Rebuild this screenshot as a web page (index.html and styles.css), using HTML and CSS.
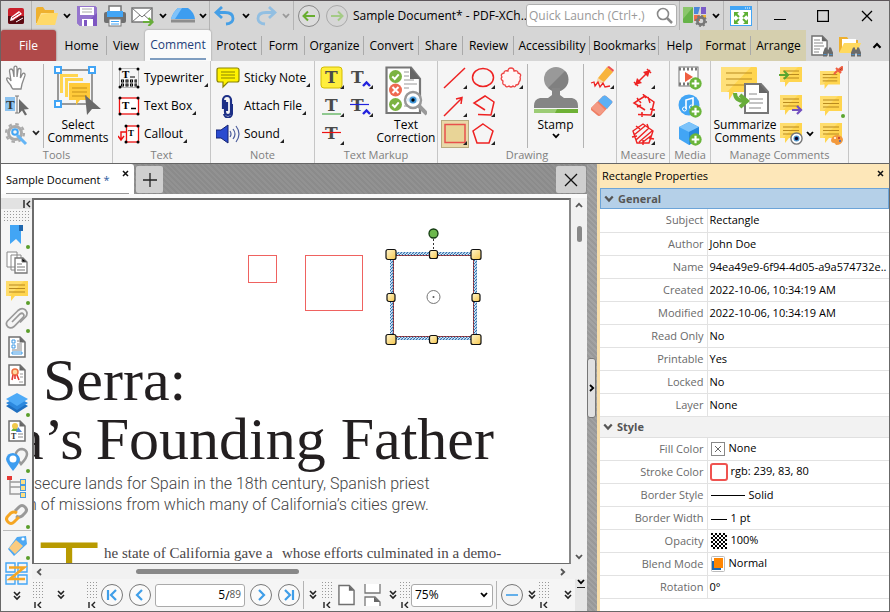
FILE: index.html
```html
<!DOCTYPE html>
<html lang="en">
<head>
<meta charset="utf-8">
<title>Sample Document* - PDF-XChange Editor</title>
<link rel="stylesheet" href="styles.css">
</head>
<body>
<svg class="sprite" width="0" height="0" aria-hidden="true">
  <defs>
    <linearGradient id="gold" x1="0" y1="0" x2="1" y2="1"><stop offset="0" stop-color="#fff6d0"/><stop offset="1" stop-color="#f6c74c"/></linearGradient>
    <pattern id="hatch" width="3" height="3" patternUnits="userSpaceOnUse"><rect width="3" height="3" fill="#d9ecfb"/><path d="M0 3L3 0" stroke="#2d6fae" stroke-width="1.2"/></pattern>
    <pattern id="dots" width="3" height="3" patternUnits="userSpaceOnUse"><rect width="1" height="1" fill="#999"/></pattern>
    <pattern id="check" width="4" height="4" patternUnits="userSpaceOnUse"><rect width="4" height="4" fill="#fff"/><path d="M0 0h2v2h-2zM2 2h2v2h-2z" fill="#000"/></pattern>
  </defs>
  <symbol id="chev" viewBox="0 0 8 6"><path d="M1 1l3 3.2L7 1" fill="none" stroke="currentColor" stroke-width="1.8"/></symbol>
  <symbol id="dchev" viewBox="0 0 8 10"><path d="M1 1l3 3 3-3M1 5l3 3 3-3" fill="none" stroke="#222" stroke-width="1.6"/></symbol>
  <symbol id="grip" viewBox="0 0 10 26"><rect width="10" height="17" fill="url(#dots)"/><path d="M2 20v6M8 20L5 23l3 3" fill="none" stroke="#222" stroke-width="1.4"/></symbol>
  <symbol id="bub" viewBox="0 0 24 22"><path d="M1 1h22v15H10l-4 5v-5H1z" fill="#ffd54f"/><path d="M1 1h18L4 16H1z" fill="#ffdd6c"/><path d="M4 5h16M4 8.500h16M4 12h16" stroke="#b98a1f" stroke-width="1.1"/></symbol>
  <symbol id="plus" viewBox="0 0 12 12"><circle cx="6" cy="6" r="5.700" fill="#6ab53a"/><path d="M6 2.500v7M2.500 6h7" stroke="#fff" stroke-width="2"/></symbol>
  <symbol id="doc" viewBox="0 0 18 22"><path d="M1 1h11l5 5v15H1z" fill="#fff" stroke="#707070" stroke-width="1.500"/><path d="M11.500 1v5.500H17z" fill="#666"/></symbol>
  <symbol id="bino" viewBox="0 0 12 11"><path d="M1 10V6l2-5h2v2h2V1h2l2 5v4H7V7H5v3z" fill="#6b6b6b"/><path d="M1.500 8h3M7.500 8h3" stroke="#4d8fc6" stroke-width="1"/></symbol>
  <symbol id="ok" viewBox="0 0 12 12"><circle cx="6" cy="6" r="6" fill="#7cb342"/><path d="M3 6l2.300 2.300L9 4" fill="none" stroke="#fff" stroke-width="1.800"/></symbol>
  <symbol id="eye" viewBox="0 0 14 14"><circle cx="7" cy="7" r="6" fill="#fff" stroke="#777" stroke-width="1.500"/><circle cx="7" cy="7" r="3.200" fill="#4b91c7"/><circle cx="7" cy="7" r="1.800" fill="#102"/></symbol>
</svg>

<div class="window">
  <header class="titlebar">
    <span class="cell w30"><svg width="18" height="18" viewBox="0 0 18 18"><rect x="1" y="1" width="16" height="16" rx="2" fill="#c9202b"/><path d="M1 9h16v6a2 2 0 0 1-2 2H3a2 2 0 0 1-2-2z" fill="#5a0a12"/><path d="M3 14l1-4 8-6 3 3-8 6z" fill="#fff"/><path d="M5 11l8-5M6.500 13l8-5" stroke="#c9202b"/><path d="M9 15l7-4" stroke="#fff"/></svg></span>
    <button class="cell w30 sep-left" aria-label="Open"><svg width="24" height="20" viewBox="0 0 24 20"><path d="M1 3q0-2 2-2h5l2 3h9v13H1z" fill="#eeb02f"/><path d="M6 7h17l-3 12H1z" fill="#ffe08a"/><path d="M1 19L6 9l8-2h9l-3 12z" fill="#ffd454" opacity=".6"/></svg></button>
    <button class="cell w12" aria-label="Open options"><svg width="8" height="6"><use href="#chev"/></svg></button>
    <button class="cell w28" aria-label="Save"><svg width="22" height="22" viewBox="0 0 22 22"><path d="M1 1h18l2 2v18H4l-3-3z" fill="#7e57c2"/><path d="M1 1h18l2 2v5L7 21H4l-3-3z" fill="#9575cd"/><rect x="4" y="2" width="14" height="8" fill="#fff"/><path d="M6 4h10M6 7h10" stroke="#aaa"/><rect x="6" y="14" width="11" height="7" fill="#fff"/><rect x="8" y="15" width="3" height="6" fill="#7e57c2"/></svg></button>
    <button class="cell w28" aria-label="Print"><svg width="22" height="22" viewBox="0 0 22 22"><path d="M5 1h12v7H5z" fill="#fff" stroke="#777" stroke-width="1.500"/><rect x="0" y="7" width="22" height="11" rx="2" fill="#707070"/><path d="M3 6h16v6H3z" fill="#42a5f5"/><rect x="5" y="14" width="12" height="7" fill="#fff" stroke="#777"/><path d="M7 16.500h8M7 19h8" stroke="#42a5f5"/></svg></button>
    <button class="cell w28" aria-label="Send by e-mail"><svg width="24" height="20" viewBox="0 0 24 20"><rect x="1" y="2" width="20" height="14" fill="#fff" stroke="#777" stroke-width="1.500"/><path d="M1 2l10 9L21 2M1 16l8-7M21 16l-8-7" fill="none" stroke="#777"/><path d="M12 16h9M17.500 12l4 4-4 4" fill="none" stroke="#68ad3a" stroke-width="2.200"/></svg></button>
    <button class="cell w12" aria-label="Send options"><svg width="8" height="6"><use href="#chev"/></svg></button>
    <button class="cell w28" aria-label="Scan"><svg width="26" height="18" viewBox="0 0 26 18"><path d="M8 1h10q6 4 7 11H1Q3 5 8 1z" fill="#3d9df0"/><path d="M8 1h4L5 12H1Q3 5 8 1z" fill="#7ec2fa"/><path d="M1 14h24" stroke="#8d8d8d" stroke-width="3"/></svg></button>
    <button class="cell w12" aria-label="Scan options"><svg width="8" height="6"><use href="#chev"/></svg></button>
    <button class="cell w30 sep-left" aria-label="Undo"><svg width="22" height="20" viewBox="0 0 22 20"><path d="M8 1L2 6.500 8 12M2 6.500h9q8 0 8 6 0 5-7 5.500" fill="none" stroke="#459fe6" stroke-width="2.800"/></svg></button>
    <button class="cell w14" aria-label="Undo list"><svg width="8" height="6"><use href="#chev"/></svg></button>
    <button class="cell w26" aria-label="Redo"><svg width="22" height="20" viewBox="0 0 22 20"><path d="M14 1l6 5.500-6 5.500M20 6.500h-9q-8 0-8 6 0 5 7 5.500" fill="none" stroke="#92bfe2" stroke-width="2.800"/></svg></button>
    <button class="cell w14 faded" aria-label="Redo list"><svg width="8" height="6"><use href="#chev"/></svg></button>
    <button class="cell w30 sep-left" aria-label="Back"><svg width="24" height="24" viewBox="0 0 24 24"><circle cx="12" cy="12" r="10.500" fill="#dcdcdc" stroke="#888"/><path d="M18 12H7M11 7.500L6.500 12l4.500 4.500" fill="none" stroke="#68ad2f" stroke-width="2"/></svg></button>
    <button class="cell w28" aria-label="Forward"><svg width="24" height="24" viewBox="0 0 24 24"><circle cx="12" cy="12" r="10.500" fill="none" stroke="#aaa"/><path d="M6 12h11M13 7.500l4.500 4.500-4.500 4.500" fill="none" stroke="#a4cb86" stroke-width="2"/></svg></button>
    <h1 class="title">Sample Document* - PDF-XCh..</h1>
    <label class="launch"><input type="text" placeholder="Quick Launch (Ctrl+.)" aria-label="Quick Launch"><svg width="18" height="18" viewBox="0 0 18 18"><circle cx="7" cy="7" r="5.500" fill="none" stroke="#888" stroke-width="1.600"/><path d="M11 11l5 5" stroke="#888" stroke-width="2.500"/></svg></label>
    <button class="cell w30 sep-left" aria-label="UI options"><svg width="24" height="22" viewBox="0 0 24 22"><rect x="0" y="2" width="10" height="16" rx="1" fill="#66b348"/><path d="M0 2h10L0 14z" fill="#8bc66b"/><path d="M11 2h6l-2 7h-4z" fill="#4a86d8"/><rect x="18" y="2" width="5" height="7" fill="#7b5cc9"/><rect x="11" y="10" width="6" height="6" fill="#ef7048"/><rect x="19" y="10" width="4" height="4" fill="#f2b632"/><circle cx="18" cy="16" r="3.600" fill="none" stroke="#777" stroke-width="2.600"/><circle cx="18" cy="16" r="5.200" fill="none" stroke="#777" stroke-width="1.600" stroke-dasharray="2 2"/></svg></button>
    <button class="cell w14" aria-label="UI list"><svg width="8" height="6"><use href="#chev"/></svg></button>
    <button class="cell w34 sep-left" aria-label="Full screen"><svg width="22" height="20" viewBox="0 0 22 20"><rect x=".5" y=".5" width="21" height="19" fill="#fff" stroke="#42a5f5"/><path d="M0 0h22v4H0z" fill="#42a5f5"/><path d="M15 2h1M17 2h1M19 2h1" stroke="#fff"/><path d="M4 6h5L4 11zM18 6h-5l5 5zM4 18h5l-5-5zM18 18h-5l5-5z" fill="#5eb033"/><path d="M5 7l4 4M17 7l-4 4M5 17l4-4M17 17l-4-4" stroke="#5eb033" stroke-width="2"/></svg></button>
    <button class="cell w44 sep-left" aria-label="Minimize"><svg width="12" height="12"><path d="M0 9.500h12" stroke="#000"/></svg></button>
    <button class="cell w44" aria-label="Maximize"><svg width="12" height="12"><rect x=".5" y=".5" width="11" height="11" fill="none" stroke="#000" stroke-width="1.400"/></svg></button>
    <button class="cell w44" aria-label="Close"><svg width="12" height="12"><path d="M1 1l10 10M11 1L1 11" stroke="#000" stroke-width="1.300"/></svg></button>
  </header>

  <nav class="tabs">
    <a class="file" href="#">File</a>
    <a class="bar" href="#">Home</a>
    <a href="#">View</a>
    <a class="active" href="#"><span>Comment</span></a>
    <a class="bar" href="#">Protect</a>
    <a class="bar" href="#">Form</a>
    <a class="bar" href="#">Organize</a>
    <a class="bar" href="#">Convert</a>
    <a class="bar" href="#">Share</a>
    <a class="bar" href="#">Review</a>
    <a class="bar" href="#">Accessibility</a>
    <a class="bar" href="#">Bookmarks</a>
    <a href="#">Help</a>
    <a class="ctx bar" href="#">Format</a>
    <a class="ctx" href="#">Arrange</a>
    <div class="tab-tools">
      <button class="cell w28" aria-label="Find"><svg width="24" height="24" viewBox="0 0 24 24"><use href="#doc" x="1" y="1" width="17" height="21"/><path d="M4 6h6M4 9h9M4 12h10M4 15h6M4 18h5" stroke="#888"/><use href="#bino" x="12" y="12" width="12" height="12"/></svg></button>
      <button class="cell w28" aria-label="Search"><svg width="24" height="24" viewBox="0 0 24 24"><path d="M1 3h8l2 3h9v12H1z" fill="#eeb02f"/><path d="M4 5h14v8H4z" fill="#fff"/><path d="M6 9h17l-4 10H1z" fill="#ffd95e"/><use href="#bino" x="12" y="12" width="12" height="12"/></svg></button>
      <button class="cell grow" aria-label="Collapse ribbon"><svg class="flip" width="10" height="7"><use href="#chev"/></svg></button>
    </div>
  </nav>

  <section class="ribbon">
    <div class="group g-tools">
      <div class="body">
        <div class="col w42">
          <button class="tool" aria-label="Hand"><svg width="22" height="26" viewBox="0 0 22 26"><path d="M7 23q-1-3-4-6-2-3-1-4 2-1 4 3L4.500 6q0-2 1.500-2T8 6l1 6V3q0-1.800 1.500-1.800T12 3v9l1-7q.3-1.700 1.700-1.500T16 5.500l-.6 7.500 2-4q1-1.300 2-.6t.6 2L17 19l-1 5H8z" fill="#fff" stroke="#888" stroke-width="1.300"/></svg></button>
          <button class="tool" aria-label="Select text"><svg width="24" height="22" viewBox="0 0 24 22"><rect x="0" y="2" width="10" height="14" fill="#8cc3f0"/><text x="1" y="14" class="t-ser" font-size="13">T</text><path d="M10 1h4M12 1v17M10 18h4" stroke="#777"/><path d="M14 4l10 10-5 .5 3 5-2 1-3-5-3 3z" fill="#6a6a6a"/></svg></button>
          <button class="tool" aria-label="Settings"><svg width="36" height="24" viewBox="0 0 36 24"><circle cx="10" cy="11" r="6.500" fill="none" stroke="#aaa" stroke-width="3"/><circle cx="10" cy="11" r="9" fill="none" stroke="#aaa" stroke-width="2.200" stroke-dasharray="3.500 3.570"/><circle cx="10" cy="10" r="2.800" fill="none" stroke="#42a5f5" stroke-width="2"/><path d="M12 13l9 9" stroke="#64b5f6" stroke-width="3"/><path d="M28 9l3 3.200 3-3.200" fill="none" stroke="#222" stroke-width="1.800"/></svg></button>
        </div>
        <button class="big sep-left grow"><svg width="48" height="50" viewBox="0 0 48 50"><rect x="4" y="4" width="34" height="34" fill="none" stroke="#999" stroke-width="2"/><path d="M6 8h18v3H9v16H6zM11 12h18v3H14v16h-3z" fill="#ffd54f"/><path d="M15 17h21v17H26l-4 5v-5h-7z" fill="#ffca3a"/><path d="M18 22h15M18 26h15M18 30h15" stroke="#c79118"/><g fill="#fff" stroke="#42a5f5" stroke-width="2"><rect x="1" y="1" width="6" height="6"/><rect x="35" y="1" width="6" height="6"/><rect x="1" y="35" width="6" height="6"/></g><path d="M31 29l16 14h-9l-5 6z" fill="#6a6a6a"/></svg><span>Select<br>Comments</span></button>
      </div>
      <h2>Tools</h2>
    </div>
    <div class="group g-text">
      <div class="body"><div class="col grow">
        <button class="row"><svg width="22" height="22" viewBox="0 0 22 22"><rect x="1.500" y="1.500" width="19" height="19" fill="none" stroke="#777" stroke-dasharray="1 1"/><text x="4" y="11" class="t-blk" font-size="11">T</text><path d="M12 10h5" stroke="#000"/><path d="M3 14h16M3 18h16" stroke="#000" stroke-width="3" stroke-dasharray="3 1.500"/><path d="M4 14h15M4 18h15" stroke="#fff" stroke-dasharray="1 3.500"/><g><circle cx="2" cy="2" r="1.500"/><circle cx="20" cy="2" r="1.500"/><circle cx="2" cy="20" r="1.500"/><circle cx="20" cy="20" r="1.500"/></g></svg><span>Typewriter</span></button>
        <button class="row"><svg width="22" height="20" viewBox="0 0 22 20"><rect x="1.500" y="2" width="19" height="16" fill="#fff" stroke="#e11" stroke-width="1.300"/><text x="4" y="13" class="t-blk" font-size="11">T</text><path d="M13 12.500h5" stroke="#000" stroke-width="1.500"/><circle cx="2" cy="2" r="1.500"/><circle cx="20" cy="2" r="1.500"/><circle cx="2" cy="18" r="1.500"/><circle cx="20" cy="18" r="1.500"/></svg><span>Text Box</span></button>
        <button class="row"><svg width="22" height="20" viewBox="0 0 22 20"><rect x="8.500" y="2" width="12" height="16" fill="#fff" stroke="#e11" stroke-width="1.300"/><text x="10" y="12" class="t-blk" font-size="9">T</text><path d="M8 8H3v8M0 12l3 4 3-4" fill="none" stroke="#e11" stroke-width="1.400"/><circle cx="8" cy="2" r="1.500"/><circle cx="20" cy="2" r="1.500"/><circle cx="8" cy="18" r="1.500"/><circle cx="20" cy="18" r="1.500"/></svg><span>Callout</span></button>
      </div></div>
      <h2>Text</h2>
    </div>
    <div class="group g-note">
      <div class="body"><div class="col grow">
        <button class="row"><svg width="24" height="22" viewBox="0 0 24 22"><path d="M3 1h18q2 0 2 2v10q0 2-2 2H12l-5 5v-5H3q-2 0-2-2V3q0-2 2-2z" fill="#fff200" stroke="#8a8300" stroke-width="1.200"/><path d="M5 5h14M5 8h14M5 11h14" stroke="#8a8300"/></svg><span>Sticky Note</span></button>
        <button class="row"><svg width="24" height="24" viewBox="0 0 24 24"><path d="M9 6v12a3 3 0 0 0 6 0V6a4 4 0 0 0-8 0v9M11 8v9" fill="none" stroke="#1c2f86" stroke-width="2.200"/><path d="M16 10v9a4 4 0 0 1-8 1" fill="none" stroke="#1c2f86" stroke-width="2"/></svg><span>Attach File</span></button>
        <button class="row"><svg width="24" height="20" viewBox="0 0 24 20"><path d="M0 6h5l7-5v18l-7-5H0z" fill="#2a4bd0" stroke="#15236e"/><path d="M14 7q2 3 0 6M17 5q4 5 0 10M20 2q6 8 0 16" fill="none" stroke="#4a5c9c" stroke-width="1.200"/></svg><span>Sound</span></button>
      </div></div>
      <h2>Note</h2>
    </div>
    <div class="group g-markup">
      <div class="body">
        <div class="tiles two">
          <button class="tile more" aria-label="Highlight"><svg width="24" height="24" viewBox="0 0 24 24"><rect x="1" y="1" width="21" height="21" rx="3" fill="#ffee3d" stroke="#d4bd00"/><text x="5" y="17" class="t-mk">T</text></svg></button>
          <button class="tile more" aria-label="Insert text"><svg width="24" height="24" viewBox="0 0 24 24"><text x="2" y="17" class="t-mk">T</text><path d="M14 20l3.500-3.500L21 20" fill="none" stroke="#22d" stroke-width="2.400"/></svg></button>
          <button class="tile more" aria-label="Underline"><svg width="24" height="24" viewBox="0 0 24 24"><text x="5" y="17" class="t-mk">T</text><path d="M2 20h19" stroke="#58b158" stroke-width="1.300"/></svg></button>
          <button class="tile more" aria-label="Replace text"><svg width="24" height="24" viewBox="0 0 24 24"><text x="2" y="17" class="t-mk">T</text><path d="M1 10.500h19" stroke="#22d" stroke-width="1.200"/><path d="M14 20l3.500-3.500L21 20" fill="none" stroke="#22d" stroke-width="2.400"/></svg></button>
          <button class="tile more" aria-label="Strikeout"><svg width="24" height="24" viewBox="0 0 24 24"><text x="5" y="17" class="t-mk">T</text><path d="M2 10.500h19" stroke="#e11" stroke-width="1.200"/></svg></button>
        </div>
        <button class="big grow"><svg width="42" height="50" viewBox="0 0 42 50"><path d="M1.500 1.500H26L35 13v34H1.500z" fill="#fff" stroke="#777" stroke-width="2.200"/><path d="M25 1v12h10z" fill="#666"/><use href="#ok" x="4" y="4" width="13" height="13"/><circle cx="10.500" cy="24" r="6.500" fill="#ef6950"/><path d="M7.500 21l6 6M13.500 21l-6 6" stroke="#fff" stroke-width="2"/><use href="#ok" x="4" y="32" width="13" height="13"/><path d="M19 6h5M19 10h5M19 14h10M19 18h13M19 22h5M19 40h8" stroke="#999"/><path d="M33 39l9 9" stroke="#999" stroke-width="4"/><circle cx="28" cy="34" r="8" fill="#fff" stroke="#999" stroke-width="2.500"/><path d="M21 34q7-8 14 0-7 7-14 0" fill="#dcecf8"/><circle cx="28" cy="34" r="3.500" fill="#3f96d8"/><circle cx="28" cy="34" r="1.700"/></svg><span>Text<br>Correction</span></button>
      </div>
      <h2>Text Markup</h2>
    </div>
    <div class="group g-draw">
      <div class="body">
        <div class="tiles three">
          <button class="tile more" aria-label="Line"><svg width="24" height="24"><path d="M1 22L22 2" stroke="#e22" stroke-width="1.500"/></svg></button>
          <button class="tile more" aria-label="Oval"><svg width="24" height="24"><ellipse cx="12" cy="11.500" rx="10.500" ry="9" fill="none" stroke="#e22" stroke-width="1.500"/></svg></button>
          <button class="tile more" aria-label="Cloud"><svg width="24" height="24"><path d="M12 2q3 0 3 3 4-1 4 2 4 1 2 4 1 3-1 5 0 3-3 3-1 3-3 1-2 2-4 0-3 2-4-1-3 0-2-4-3-2-1-4-2-3 2-4 0-3 4-2 0-3 3-3z" fill="#fff6f6" stroke="#e44" stroke-width="1.300"/></svg></button>
          <button class="tile more" aria-label="Arrow"><svg width="24" height="24"><path d="M1 22L19 4M13 5l6-1.500L18 10" fill="none" stroke="#e22" stroke-width="1.500"/></svg></button>
          <button class="tile more" aria-label="Polyline"><svg width="24" height="24"><path d="M14 16L3 9l11-7 9 6-3 13-13-.5" fill="none" stroke="#e22" stroke-width="1.500"/></svg></button>
          <span class="tile"></span>
          <button class="tile more chosen" aria-label="Rectangle"><svg width="24" height="22"><rect x="2" y="1.500" width="20" height="18" fill="#e8d497" stroke="#e8504c" stroke-width="1.500"/></svg></button>
          <button class="tile more" aria-label="Polygon"><svg width="24" height="24"><path d="M12 2L22 9 18 21H6L2 9z" fill="none" stroke="#e22" stroke-width="1.500"/></svg></button>
        </div>
        <button class="big stamp sep-left"><svg width="46" height="50" viewBox="0 0 46 50"><circle cx="23" cy="13" r="12" fill="#999"/><path d="M32 5a12 12 0 0 1-17 17z" fill="#808080"/><path d="M19 22h8v7l4 3h8q6 1 6 8v2H1v-2q0-7 6-8h8l4-3z" fill="#858585"/><path d="M1 43h44v4H1z" fill="#9ccc75"/><path d="M24 43h21v4H22z" fill="#6eb135"/></svg><span>Stamp</span><svg width="8" height="6"><use href="#chev"/></svg></button>
        <div class="tiles one sep-left">
          <button class="tile more" aria-label="Pencil"><svg width="24" height="24"><path d="M8 12l9-11 6 5-9 10-7 2z" fill="#f8b43c"/><path d="M17 1l6 5 1-2-5-4z" fill="#ef5350"/><path d="M8 12l6 4-8 2z" fill="#f6d9ae"/><path d="M1 17l3-1 1 4 3-4 2 5 3-4 2 4 5-1" fill="none" stroke="#e22" stroke-width="1.300"/></svg></button>
          <button class="tile" aria-label="Eraser"><svg width="24" height="24"><path d="M1 14L13 2q2-1 3 0l6 5q1 1 0 2L11 21q-2 2-4 0l-6-5z" fill="#ef7e63"/><path d="M8 7l5-5q2-1 3 0l6 5q1 1 0 2l-5 6z" fill="#5cb0f5"/><path d="M1 14l6-6 8 8-5 5z" fill="#f39a84"/></svg></button>
        </div>
      </div>
      <h2>Drawing</h2>
    </div>
    <div class="group g-measure">
      <div class="body mid"><div class="tiles one">
        <button class="tile more" aria-label="Distance"><svg width="24" height="24"><path d="M4 19L19 4M3 16l4 4M16 3l4 4" fill="none" stroke="#e22" stroke-width="1.500"/><path d="M4 19l2-7 5 5zM19 4l-7 2 5 5z" fill="#e22"/></svg></button>
        <button class="tile more" aria-label="Perimeter"><svg width="24" height="24"><path d="M14 16L3 9l11-7 9 6-3 13-13-.5M6 4l4 5M17 3l2 6M19 15l5 1M11 18v5M6 13l4-2M12 0l3 4" fill="none" stroke="#e22" stroke-width="1.500"/></svg></button>
        <button class="tile more" aria-label="Area"><svg width="24" height="24"><path d="M12 2L22 9 18 21H6L2 9zM3 13L14 4M5 18L18 6M8 20L21 9M12 20l9-7M5 4l4 3M16 2l2 5M1 15l5-1M18 16l5 1M12 18v5" fill="none" stroke="#e22" stroke-width="1.400"/></svg></button>
      </div></div>
      <h2>Measure</h2>
    </div>
    <div class="group g-media">
      <div class="body mid"><div class="tiles one">
        <button class="tile" aria-label="Video"><svg width="24" height="24"><rect x="1" y="1" width="19" height="19" fill="#fff" stroke="#777"/><path d="M1 3h20M1 18h20" stroke="#777" stroke-width="3" stroke-dasharray="2 2"/><path d="M7 6l8 5-8 5z" fill="#ef5f42"/><use href="#plus" x="11" y="11" width="13" height="13"/></svg></button>
        <button class="tile" aria-label="Audio"><svg width="24" height="24"><circle cx="11" cy="11" r="10.500" fill="#42a5f5"/><path d="M8 15V6l7-2v9" fill="none" stroke="#fff" stroke-width="1.600"/><circle cx="6.500" cy="15" r="2" fill="none" stroke="#fff"/><circle cx="13.500" cy="13" r="2" fill="none" stroke="#fff"/><use href="#plus" x="11" y="11" width="13" height="13"/></svg></button>
        <button class="tile" aria-label="3D"><svg width="24" height="24"><path d="M11 0l10 5v12l-10 6L1 17V5z" fill="#42a5f5"/><path d="M11 0l10 5-10 5L1 5z" fill="#7cc3fa"/><path d="M11 10l10-5v12l-10 6z" fill="#2688dd"/><use href="#plus" x="11" y="11" width="13" height="13"/></svg></button>
      </div></div>
      <h2>Media</h2>
    </div>
    <div class="group g-manage">
      <div class="body">
        <button class="big sum"><svg width="48" height="50" viewBox="0 0 48 50"><path d="M0 2q0-1 1-1h34q1 0 1 1v24H13l-5 8v-8H0z" fill="#ffd54f"/><path d="M0 1h30L6 26H0z" fill="#ffe079"/><path d="M5 7h26M5 13h26M5 19h18" stroke="#b98a1f"/><path d="M24 18h16l7 8v21H24z" fill="#fff" stroke="#777" stroke-width="2"/><path d="M38 17v10h9z" fill="#666"/><path d="M28 28h8M28 33h14M28 37h14M28 42h12" stroke="#888"/><path d="M14 27q0 8 10 8M19 29l7 6-7 6" fill="none" stroke="#68ad3a" stroke-width="4"/></svg><span>Summarize<br>Comments</span></button>
        <div class="tiles manage">
          <button class="tile" aria-label="Import comments"><svg width="24" height="24"><use href="#bub" width="24" height="22"/><path d="M0 9h8M5 5l4 4-4 4" fill="none" stroke="#5ba52f" stroke-width="2"/></svg></button>
          <button class="tile" aria-label="Pin comments"><svg width="24" height="24"><use href="#bub" y="4" width="22" height="20"/><path d="M15 8l4-4M17 2l5 5M19 4l4-3 1 2-4 3" stroke="#ef5f42" stroke-width="2"/></svg></button>
          <button class="tile" aria-label="Export comments"><svg width="24" height="24"><use href="#bub" width="24" height="22"/><path d="M13 16h9M18 12l4 4-4 4" fill="none" stroke="#7350c0" stroke-width="2.200"/></svg></button>
          <button class="tile" aria-label="Comment list"><svg width="28" height="24"><use href="#bub" y="1" width="24" height="22"/><circle cx="24" cy="22" r="2" fill="#5ba52f"/></svg></button>
          <button class="tile" aria-label="Show comments"><svg width="36" height="24"><use href="#bub" width="24" height="22"/><use href="#eye" x="11" y="10" width="13" height="13"/><use href="#chev" x="27" y="9" width="8" height="6"/></svg></button>
          <button class="tile" aria-label="Comment styles"><svg width="24" height="24"><use href="#bub" width="24" height="22"/><path d="M12 18q1-5 7-5 5 1 5 5-1 5-7 5-1-2-2-2-3 0-3-3z" fill="#f39a3d"/><circle cx="16" cy="16" r="1" fill="#fff"/><circle cx="20" cy="16" r="1" fill="#b33"/><circle cx="21" cy="19" r="1" fill="#36c"/></svg></button>
        </div>
      </div>
      <h2>Manage Comments</h2>
    </div>
  </section>

  <main class="work">
    <section class="docarea">
      <div class="doctabs">
        <a class="doctab" href="#"><span>Sample Document <b>*</b></span><svg width="7" height="7"><path d="M1 1l5 5M6 1L1 6" stroke="#111" stroke-width="1.500"/></svg></a>
        <button class="newtab" aria-label="New tab"><svg width="16" height="16"><path d="M8 1v14M1 8h14" stroke="#222" stroke-width="1.300"/></svg></button>
        <button class="closetab" aria-label="Close document"><svg width="14" height="14"><path d="M1 1l12 12M13 1L1 13" stroke="#111" stroke-width="1.300"/></svg></button>
      </div>
      <div class="docbody">
        <aside class="side">
          <div class="pin"><svg width="8" height="8"><path d="M1 0v8M7 1L4 4l3 3" fill="none" stroke="#222" stroke-width="1.400"/></svg></div>
          <svg class="sgrip" width="26" height="10"><rect width="26" height="10" fill="url(#dots)"/></svg>
          <button class="panel dot" aria-label="Bookmarks"><svg width="16" height="22"><path d="M1 1h11v19l-5-5-6 5z" fill="#42a5f5"/><path d="M10 1h4v6h-4z" fill="#2067ae"/></svg></button>
          <button class="panel" aria-label="Thumbnails"><svg width="22" height="24"><path d="M1 1h10v15H1zM5 4h10v15H5z" fill="#fff" stroke="#888"/><path d="M9 7h8l4 4v11H9z" fill="#fff" stroke="#777" stroke-width="1.300"/><path d="M16 7v4h5zM11 13h5M11 16h8M11 19h8" stroke="#777"/></svg></button>
          <button class="panel dot" aria-label="Comments"><svg width="24" height="22"><use href="#bub" width="24" height="22"/></svg></button>
          <button class="panel dot" aria-label="Attachments"><svg width="24" height="24"><path d="M7 15L15 7q2-1.500 3.300 0t0 3.200L9 19.500q-3 2.500-6 .5-3-3-.5-6L13 3.500q4-3.500 7.500-.5 3 3.500 0 7L15 15.500" fill="none" stroke="#999" stroke-width="1.700"/></svg></button>
          <button class="panel" aria-label="Fields"><svg width="18" height="22"><use href="#doc" width="18" height="22"/><path d="M4 4h3v3H4zM4 9h3v3H4zM4 16h10v2H4z" fill="none" stroke="#3f9ae5"/><path d="M9 5h2M9 8h5M9 10h5M9 12h5M4 14h10" stroke="#888"/></svg></button>
          <button class="panel" aria-label="Signatures"><svg width="18" height="22"><use href="#doc" width="18" height="22"/><circle cx="7" cy="8" r="3" fill="#ffd9a0" stroke="#ef6f42" stroke-width="1.500"/><path d="M5 11l-1 5M9 11l2 5M7 11v4" stroke="#e53935" stroke-width="1.600"/><path d="M12 10h3M12 13h3M11 18h4" stroke="#999"/></svg></button>
          <button class="panel dot" aria-label="Layers"><svg width="24" height="22"><path d="M12 8l11 6-11 7L1 14z" fill="#1f6fc0"/><path d="M12 5l11 6-11 7L1 11z" fill="#2c88de"/><path d="M12 1l11 6-11 7L1 7z" fill="#4daaf7"/></svg></button>
          <button class="panel" aria-label="Content"><svg width="18" height="22"><use href="#doc" width="18" height="22"/><path d="M3 11l4-5 4 5z" fill="#68ad3a"/><circle cx="7" cy="6" r="3" fill="#f2c94c"/><path d="M10 7l4 5H8z" fill="#4a86d8"/><text x="3" y="19" class="t-ser" font-size="8">T</text><path d="M10 14h5M10 17h5" stroke="#888"/></svg></button>
          <button class="panel dot" aria-label="Destinations"><svg width="24" height="24"><path d="M16 17q-6-8-5-11 2-4 6-4 5 1 5 5 0 4-6 10z" fill="none" stroke="#999" stroke-width="2.500"/><path d="M8 24Q1 15 1 12q1-6 7-6 6 1 7 6 0 4-7 12z" fill="#3d9df0"/><circle cx="8" cy="12" r="3.500" fill="#fff"/></svg></button>
          <button class="panel" aria-label="Structure"><svg width="22" height="24"><path d="M4 4v15h10M4 12h10M4 7h10" fill="none" stroke="#999" stroke-width="1.400"/><rect x="1" y="1" width="5" height="4" fill="#e53935"/><g fill="#ffe082" stroke="#4a9be0"><rect x="14.500" y="4.500" width="5" height="5"/><rect x="14.500" y="10.500" width="5" height="5"/><rect x="14.500" y="17.500" width="5" height="5"/></g></svg></button>
          <button class="panel dot" aria-label="Links"><svg width="24" height="24"><path d="M10 8l4-4q3-3 6 0t0 6l-3 3q-3 2-6 0" fill="none" stroke="#999" stroke-width="3"/><path d="M14 14l-5 5q-3 3-6 0t0-6l3-3q3-2 6 0" fill="none" stroke="#f5a623" stroke-width="3"/></svg></button>
          <hr>
          <button class="panel dot" aria-label="Tags"><svg width="22" height="24"><path d="M11 3l9-1 1 8L8 22l-6-7z" fill="#4da8f3"/><path d="M10 6l7 6-8 8-6-6z" fill="#fbcb7f"/><circle cx="17" cy="5" r="1.600" fill="#fff"/></svg></button>
          <button class="panel" aria-label="Article threads"><svg width="24" height="24"><path d="M1 1h9v9H1zM13 1h9v9h-9zM1 13h9v9H1zM13 13h9v9h-9z" fill="none" stroke="#42a5f5" stroke-width="1.400"/><path d="M4 5.500h15L5 17h15" fill="none" stroke="#f5a623" stroke-width="2.600"/></svg></button>
          <button class="sidemore" aria-label="More panels"><svg width="8" height="10"><use href="#dchev"/></svg></button>
        </aside>
        <div class="view">
          <div class="canvas">
            <article class="page">
              <h3>Serra:</h3>
              <h3 class="second"><span>a’s</span><span>Founding Father</span></h3>
              <p class="lead">secure lands for Spain in the 18th century, Spanish priest</p>
              <p class="lead cut">n of missions from which many of California’s cities grew.</p>
              <div class="columns">
                <span class="drop">T</span>
                <p class="c1">he state of California gave a</p>
                <p class="c2">whose efforts culminated in a demo-</p>
              </div>
            </article>
            <div class="sq small"></div>
            <div class="sq large"></div>
            <svg class="selection" width="98" height="120" viewBox="0 0 98 120">
              <path d="M48.500 12v12" stroke="#333" stroke-dasharray="2 2"/>
              <path d="M5 25h87v88H5zM9 29v80h79V29z" fill="url(#hatch)" fill-rule="evenodd"/>
              <rect x="8.500" y="28.500" width="80" height="81" fill="none" stroke="#b8434a"/>
              <rect x="8.500" y="28.500" width="80" height="81" fill="none" stroke="#234" stroke-dasharray="1 2"/>
              <circle cx="48.500" cy="6.500" r="4.500" fill="#6cb84c" stroke="#123a10" stroke-width="1.300"/>
              <circle cx="48.500" cy="70" r="6.500" fill="none" stroke="#777"/><circle cx="48.500" cy="70" r="1" fill="#555"/>
              <g fill="url(#gold)" stroke="#111" stroke-width="1.200"><rect x="1" y="22.500" width="10" height="10" rx="2"/><rect x="86" y="22.500" width="10" height="10" rx="2"/><rect x="1" y="107.500" width="10" height="10" rx="2"/><rect x="86" y="107.500" width="10" height="10" rx="2"/><rect x="44.500" y="23.500" width="8" height="8" rx="2"/><rect x="44.500" y="108.500" width="8" height="8" rx="2"/><rect x="2" y="66.500" width="8" height="8" rx="2"/><rect x="87" y="66.500" width="8" height="8" rx="2"/></g>
            </svg>
          </div>
          <div class="vscroll"><svg class="flip" width="8" height="6"><use href="#chev"/></svg><i></i><svg width="8" height="6"><use href="#chev"/></svg></div>
          <div class="hscroll"><svg class="left" width="8" height="6"><use href="#chev"/></svg><i></i><svg class="right" width="8" height="6"><use href="#chev"/></svg></div>
          <footer class="status">
            <svg class="g" width="10" height="26"><use href="#grip"/></svg>
            <button class="cell w34" aria-label="Toolbar options"><svg width="8" height="10"><use href="#dchev"/></svg></button>
            <svg class="g gap" width="10" height="26"><use href="#grip"/></svg>
            <button class="cell w28" aria-label="First page"><svg width="24" height="24"><circle cx="12" cy="12" r="10.500" fill="#fafafa" stroke="#777"/><path d="M8 7v10M16 7l-5 5 5 5" fill="none" stroke="#3f9ee8" stroke-width="2.200"/></svg></button>
            <button class="cell w28" aria-label="Previous page"><svg width="24" height="24"><circle cx="12" cy="12" r="10.500" fill="#fafafa" stroke="#777"/><path d="M14 7l-5 5 5 5" fill="none" stroke="#3f9ee8" stroke-width="2.200"/></svg></button>
            <label class="pageno"><input type="text" value="5" aria-label="Page"><span>/<small>89</small></span></label>
            <button class="cell w28" aria-label="Next page"><svg width="24" height="24"><circle cx="12" cy="12" r="10.500" fill="#fafafa" stroke="#777"/><path d="M10 7l5 5-5 5" fill="none" stroke="#3f9ee8" stroke-width="2.200"/></svg></button>
            <button class="cell w28" aria-label="Last page"><svg width="24" height="24"><circle cx="12" cy="12" r="10.500" fill="#fafafa" stroke="#777"/><path d="M8 7l5 5-5 5M16 7v10" fill="none" stroke="#3f9ee8" stroke-width="2.200"/></svg></button>
            <button class="cell w18 sep-left" aria-label="Navigation options"><svg width="8" height="10"><use href="#dchev"/></svg></button>
            <svg class="g" width="10" height="26"><use href="#grip"/></svg>
            <button class="cell w26" aria-label="Single page"><svg width="17" height="22"><use href="#doc" width="17" height="22"/></svg></button>
            <button class="cell w28" aria-label="Continuous"><svg width="18" height="22"><path d="M1 0v9h15V0M1 22v-9h10l5 5v4" fill="#fff" stroke="#777" stroke-width="1.300"/><path d="M10 13v5h6z" fill="#666"/></svg></button>
            <button class="cell w12" aria-label="Layout options"><svg width="8" height="10"><use href="#dchev"/></svg></button>
            <svg class="g" width="10" height="26"><use href="#grip"/></svg>
            <div class="zoom"><select aria-label="Zoom"><option>75%</option></select><svg width="8" height="6"><use href="#chev"/></svg></div>
            <button class="cell w30 sep-left" aria-label="Zoom out"><svg width="24" height="24"><circle cx="12" cy="12" r="10.500" fill="#f3f3f3" stroke="#777"/><path d="M6 12h12" stroke="#3f9ee8" stroke-width="1.600"/></svg></button>
            <button class="cell w12" aria-label="Zoom options"><svg width="8" height="10"><use href="#dchev"/></svg></button>
            <svg class="g" width="10" height="26"><use href="#grip"/></svg>
            <button class="cell w12 push" aria-label="More"><svg width="8" height="10"><use href="#dchev"/></svg></button>
            <button class="corner" aria-label="Customize"><svg width="8" height="10"><use href="#chev" width="8" height="6"/><path d="M0 8.500h8" stroke="#222"/></svg></button>
          </footer>
        </div>
      </div>
    </section>
    <div class="splitter"><button aria-label="Collapse pane"><svg class="right" width="8" height="6"><use href="#chev"/></svg></button></div>
    <aside class="props">
      <header><h2>Rectangle Properties</h2><button aria-label="Close pane"><svg width="7" height="7"><path d="M1 1l5 5M6 1L1 6" stroke="#111" stroke-width="1.500"/></svg></button></header>
      <h3 class="sel"><svg width="10" height="8"><use href="#chev"/></svg>General</h3>
      <table>
        <tr><th>Subject</th><td>Rectangle</td></tr>
        <tr><th>Author</th><td>John Doe</td></tr>
        <tr><th>Name</th><td>94ea49e9-6f94-4d05-a9a574732e..</td></tr>
        <tr><th>Created</th><td>2022-10-06, 10:34:19 AM</td></tr>
        <tr><th>Modified</th><td>2022-10-06, 10:34:19 AM</td></tr>
        <tr><th>Read Only</th><td>No</td></tr>
        <tr><th>Printable</th><td>Yes</td></tr>
        <tr><th>Locked</th><td>No</td></tr>
        <tr><th>Layer</th><td>None</td></tr>
      </table>
      <h3><svg width="10" height="8"><use href="#chev"/></svg>Style</h3>
      <table>
        <tr><th>Fill Color</th><td><svg width="14" height="14"><rect x=".5" y=".5" width="13" height="13" fill="#fff" stroke="#888"/><path d="M4 4l6 6M10 4l-6 6" stroke="#666"/></svg>None</td></tr>
        <tr><th>Stroke Color</th><td class="tight"><svg width="18" height="18"><rect x="1" y="1" width="16" height="16" rx="2" fill="#fff" stroke="#ef5350" stroke-width="2"/></svg>rgb: 239, 83, 80</td></tr>
        <tr><th>Border Style</th><td><svg width="34" height="12"><path d="M0 5.500h34" stroke="#000"/></svg>Solid</td></tr>
        <tr><th>Border Width</th><td><svg width="16" height="12"><path d="M0 6.500h16" stroke="#000"/></svg>1 pt</td></tr>
        <tr><th>Opacity</th><td><svg width="16" height="16"><rect width="16" height="16" fill="url(#check)"/></svg>100%</td></tr>
        <tr><th>Blend Mode</th><td><svg width="14" height="16"><rect x=".5" y=".5" width="13" height="15" rx="1" fill="#fff" stroke="#bbb"/><rect x="1" y="5" width="9" height="9" fill="#1f68b0"/><rect x="3" y="2" width="9" height="10" fill="#ff8500"/></svg>Normal</td></tr>
        <tr><th>Rotation</th><td>0°</td></tr>
      </table>
    </aside>
  </main>
</div>
</body>
</html>
```

FILE: styles.css
```css
* { box-sizing: border-box; }
body { margin: 0; font: 12px/14px "Open Sans", "Noto Sans", sans-serif; color: #000; }
button { border: 0; padding: 0; background: none; font: inherit; color: inherit; }
a { color: inherit; text-decoration: none; }
h1, h2, h3, p { margin: 0; font-weight: 400; }
svg { display: block; flex: none; }
.sprite { position: absolute; }

.window { min-height: 100vh; display: grid; grid-template-columns: minmax(0, 1fr); grid-template-rows: 29px 31px 103px 1fr; background: #d6d6d6; border: 1px solid #686868; border-top-color: #5c5559; }
.cell { display: flex; align-items: center; justify-content: center; flex: none; }
.w12 { width: 12px; }
.w14 { width: 14px; }
.w18 { width: 18px; }
.w26 { width: 26px; }
.w28 { width: 28px; }
.w30 { width: 30px; }
.w34 { width: 34px; }
.w42 { width: 42px; }
.w44 { width: 44px; }
.grow { flex: 1; }
.sep-left { border-left: 1px solid #b4b4b4; }
.flip { transform: rotate(180deg); }
.left { transform: rotate(90deg); }
.right { transform: rotate(-90deg); }
.faded { color: #999; }

/* Title bar */
.titlebar { display: flex; align-items: stretch; }
.title { flex: 1; min-width: 0; padding-left: 2px; font-size: 12px; line-height: 29px; white-space: nowrap; overflow: hidden; }
.launch { width: 151px; margin: 3px 2px 3px 0; display: flex; align-items: center; padding: 0 2px; background: #fff; border: 1px solid #b0b0b0; border-radius: 3px; }
.launch input { flex: 1; min-width: 0; border: 0; padding: 0; font: inherit; background: none; }
.launch input::placeholder { color: #999; opacity: 1; }

/* Ribbon tabs */
.tabs { display: grid; grid-template-columns: 55px 51px 38px 66px 51px 43px 59px 55px 44px 51px 76px 69px 41px 51px 55px 1fr; }
.tabs > a { display: flex; align-items: center; justify-content: center; white-space: nowrap; position: relative; }
.tabs .bar::after { content: ""; position: absolute; right: 0; top: 6px; bottom: 6px; width: 1px; background: #aaa; }
.tabs .file { background: #b04a4a; color: #fff; border-radius: 3px 3px 0 0; box-shadow: 0 0 2px #7a5555; }
.tabs .active { background: #fafafa; color: #1f3f7a; border-radius: 3px 3px 0 0; box-shadow: 0 0 2px #888; }
.tabs .active span { line-height: 26px; border-bottom: 2px solid #7f9dc0; }
.tabs .ctx { background: #d5cfae; }
.tab-tools { display: flex; padding-left: 2px; }

/* Ribbon */
.ribbon { display: flex; position: relative; background: #f5f5f5; border-bottom: 1px solid #666; }
.group { flex: none; display: flex; flex-direction: column; border-right: 1px solid #c6c6c6; padding-top: 3px; }
.group h2 { color: #808080; text-align: center; font-size: 11px; line-height: 14px; }
.body { display: flex; height: 84px; }
.mid { justify-content: center; }
.g-tools { width: 112px; }
.g-text { width: 98px; }
.g-note { width: 104px; }
.g-markup { width: 123px; }
.g-draw { width: 179px; }
.g-measure { width: 53px; }
.g-media { width: 41px; }
.g-manage { width: 138px; }
.col { display: flex; flex-direction: column; }
.tool { height: 28px; padding-left: 4px; display: flex; align-items: center; }
.row { height: 28px; display: flex; align-items: center; padding-left: 5px; white-space: nowrap; }
.row svg { margin-right: 4px; }
.row::after { content: ""; align-self: flex-end; margin-bottom: 5px; border: 2px solid; border-color: transparent #222 #222 transparent; }
.big { display: flex; flex-direction: column; align-items: center; padding-top: 2px; line-height: 13px; gap: 2px; }
.stamp { width: 56px; }
.sum { width: 68px; }
.tiles { display: grid; grid-auto-rows: 28px; flex: none; }
.one { grid-template-columns: 28px; padding-left: 4px; }
.two { grid-template-columns: 29px 29px; padding-left: 2px; }
.three { grid-template-columns: 28px 28px 28px; width: 89px; padding-left: 3px; }
.mid .one { padding: 0; }
.manage { grid-template-columns: 40px 28px; }
.tile { display: flex; align-items: center; justify-content: center; position: relative; }
.manage .tile { justify-content: flex-start; }
.more::after { content: ""; position: absolute; right: 2px; bottom: 3px; border: 2px solid; border-color: transparent #222 #222 transparent; }
.chosen { background: #e9d9a8; outline: 1px solid #b9ab80; outline-offset: -1px; }
.t-ser { font-family: "Liberation Serif", serif; font-weight: 700; fill: #333; }
.t-blk { font-family: "Liberation Serif", serif; font-weight: 700; }
.t-mk { font-family: "DejaVu Serif", serif; font-weight: 700; font-size: 17px; fill: #4a4a4a; }

/* Workspace */
.work { display: flex; min-height: 0; }
.docarea { flex: 1; min-width: 0; display: flex; flex-direction: column; background: #8e8e8e; }
.doctabs { height: 30px; display: flex; align-items: stretch; background: repeating-linear-gradient(45deg, #8b8b8b 0 2px, #929292 2px 4px); }
.doctab { width: 133px; background: #fff; display: flex; justify-content: space-between; padding: 6px 5px 0; border-radius: 0 3px 0 0; font-size: 11px; line-height: 20px; position: relative; white-space: nowrap; }
.doctab::after { content: ""; position: absolute; left: 5px; right: 5px; bottom: 0; height: 1px; background: #999; }
.doctab b { color: #2b5ba0; font-weight: 400; }
.newtab, .closetab { display: flex; align-items: center; justify-content: center; background: #cfcfcf; margin: 2px 0 0 2px; width: 27px; height: 27px; border-radius: 2px; }
.closetab { margin-left: auto; margin-right: 1px; width: 30px; }
.docbody { flex: 1; display: flex; border-top: 4px solid #fafafa; background: #f1f1f1; }
.side { width: 31px; flex: none; display: flex; flex-direction: column; align-items: stretch; background: #f5f5f5; }
.pin { height: 11px; background: #e2e2e2; display: flex; align-items: center; justify-content: flex-end; padding-right: 1px; }
.sgrip { margin: 2px 0 0 3px; }
.panel { height: 28px; width: 31px; display: flex; align-items: center; justify-content: center; position: relative; flex: none; }
.dot::after { content: ""; position: absolute; right: 2px; bottom: 0; width: 4px; height: 4px; border-radius: 50%; background: #5a9e2a; }
.side hr { width: 28px; margin: 1px auto; border: 0; border-top: 1px solid #bbb; }
.sidemore { flex: 1; display: flex; justify-content: center; align-items: flex-start; padding-top: 3px; }

.view { flex: 1; min-width: 0; display: grid; grid-template-columns: minmax(0, 1fr) 16px; grid-template-rows: 1fr 15px 32px; }
.canvas { position: relative; overflow: hidden; background: #fff; border: 2px solid #6c6c6c; border-right-color: #888; border-bottom-width: 1px; min-height: 0; }
.page { position: absolute; inset: 0; overflow: hidden; padding-top: 151px; }
.page h3 { font: 60px/59px "Liberation Serif", serif; color: #231f20; padding-left: 9px; white-space: nowrap; }
.page .second { display: flex; gap: 12px; margin-left: -26px; }
.lead { font: 300 16px/21px Roboto, sans-serif; color: #444; white-space: nowrap; }
.lead:first-of-type { margin-top: 4px; }
.lead.cut { margin-left: -6px; }
.columns { display: flex; padding: 30px 0 0 6px; height: 80px; font: 15px/17px "Liberation Serif", serif; color: #4a4648; white-space: nowrap; }
.drop { width: 64px; font: 300 104px/104px Roboto, sans-serif; color: #b89a00; margin: -15px 0 0 -2px; }
.c1 { width: 178px; margin-left: 2px; }
.sq { position: absolute; border: 1px solid #ef6260; }
.small { left: 214px; top: 55px; width: 29px; height: 28px; }
.large { left: 271px; top: 55px; width: 58px; height: 56px; }
.selection { position: absolute; left: 351px; top: 27px; }
.vscroll { display: flex; flex-direction: column; align-items: center; padding: 4px 0; color: #555; }
.vscroll i { width: 5px; height: 16px; margin: 18px 0 auto; border-radius: 3px; background: #888; }
.hscroll { grid-column: 1 / -1; display: flex; align-items: center; padding: 0 20px 0 3px; color: #555; }
.hscroll i { width: 163px; height: 5px; margin: 0 auto 0 93px; border-radius: 3px; background: #888; }
.status { grid-column: 1 / -1; display: flex; align-items: center; background: #f5f5f5; }
.status .g { margin: 0 1px; }
.status .gap { margin-left: 9px; }
.status .sep-left { height: 28px; }
.status .push { margin-left: auto; }
.pageno { width: 90px; height: 23px; display: flex; align-items: center; background: #fff; border: 1px solid #aaa; border-radius: 3px; padding-right: 3px; margin: 0 2px 0 1px; }
.pageno input { flex: 1; min-width: 0; border: 0; padding: 0; font: inherit; text-align: right; background: none; }
.pageno small { font-size: 10px; color: #555; vertical-align: 2px; }
.zoom { width: 82px; height: 23px; margin-right: 3px; display: flex; align-items: center; background: #fff; border: 1px solid #aaa; border-radius: 3px; padding: 0 4px 0 3px; }
.zoom select { flex: 1; appearance: none; border: 0; padding: 0; background: none; font: inherit; }
.corner { width: 12px; align-self: stretch; background: #e6e6e6; display: flex; justify-content: center; margin-left: 1px; }

.splitter { width: 10px; flex: none; display: flex; align-items: center; background: repeating-linear-gradient(45deg, #999 0 2px, #a3a3a3 2px 4px); }
.splitter button { width: 9px; height: 60px; display: flex; align-items: center; justify-content: center; background: #e0e0e0; border: 1px solid #777; border-radius: 3px; }

/* Properties pane */
.props { width: 292px; flex: none; background: #fff; border-left: 3px solid #f8deaa; font-size: 11px; }
.props header { height: 24px; display: flex; justify-content: space-between; background: #fde7b9; padding: 0 5px 0 2px; }
.props header h2 { font-size: 11px; line-height: 24px; }
.props header button { align-self: flex-start; padding-top: 6px; }
.props h3 { height: 21px; display: flex; align-items: center; gap: 4px; padding-left: 3px; background: #f2f2f2; color: #555; font-weight: 700; font-size: 11px; border-bottom: 1px solid #e0e0e0; }
.props h3.sel { background: #b5d0e8; border: 1px solid #6ca4d8; }
.props table { width: 100%; border-collapse: collapse; table-layout: fixed; }
.props tr { height: 23px; border-bottom: 1px solid #e2e2e2; }
.props th { width: 107px; padding: 0 3px 0 0; text-align: right; font-weight: 400; color: #6a6a6a; border-right: 1px solid #e2e2e2; }
.props td { padding: 0 0 0 2px; white-space: nowrap; overflow: hidden; }
.props td svg { display: inline-block; vertical-align: middle; margin: 0 4px 0 1px; }
.props .tight svg { margin: 0 3px 0 0; }
```
